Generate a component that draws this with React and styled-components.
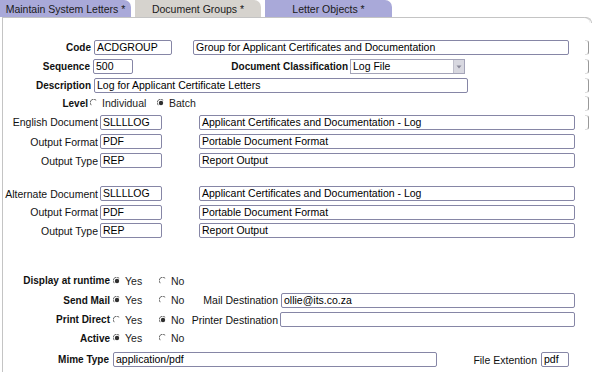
import React from 'react';
import styled, { createGlobalStyle } from 'styled-components';

const GlobalStyle = createGlobalStyle`
  html, body {
    margin: 0;
    padding: 0;
    background: #ffffff;
    font-family: "Liberation Sans", Arial, sans-serif;
    font-size: 10.5px;
    color: #000;
  }
`;

const Page = styled.div`
  width: 600px;
  height: 372px;
  overflow: hidden;
  background: #fff;
`;

const TabBar = styled.div`
  display: flex;
  height: 17px;
  gap: 4px;
`;

const Tab = styled.div`
  width: ${(p) => p.w}px;
  height: 17px;
  box-sizing: border-box;
  display: flex;
  align-items: center;
  justify-content: center;
  background: ${(p) => (p.active ? '#d6d3ce' : '#a9a9d9')};
  border-top-right-radius: 7px;
  color: #1a1a1a;
  font-size: 10.5px;
  padding-top: 1px;
`;

const Panel = styled.div`
  margin-left: 2px;
  width: 588px;
  height: 355px;
  box-sizing: border-box;
  border-top: 1px solid #c4c4c4;
  border-left: 1px solid #c4c4c4;
  border-top-right-radius: 6px;
  padding-top: 19px;
  position: relative;
`;

const Corner = styled.div`
  position: absolute;
  right: -2px;
  top: -1px;
  width: 6px;
  height: 5px;
  border-top: 1px solid #c4c4c4;
  border-right: 1px solid #c4c4c4;
  border-top-right-radius: 6px;
`;

const Form = styled.div`
  display: flex;
  flex-direction: column;
  margin-left: -3px;
`;

const Row = styled.div`
  display: flex;
  align-items: center;
  height: ${(p) => p.h || 19}px;
  margin-top: ${(p) => p.mt || 0}px;
  width: 590px;
`;

const Label = styled.div`
  width: ${(p) => p.w}px;
  flex: none;
  display: flex;
  justify-content: flex-end;
  font-weight: ${(p) => (p.bold ? 'bold' : 'normal')};
  font-size: ${(p) => (p.bold ? '10px' : '10.5px')};
  color: #111;
  white-space: nowrap;
`;

const Field = styled.div`
  width: ${(p) => p.w}px;
  height: 15px;
  flex: none;
  margin-left: ${(p) => p.ml || 0}px;
  box-sizing: border-box;
  border: 1px solid #8686a6;
  border-radius: 2px;
  background: #fff;
  padding: 0 2px;
  font-size: 10.5px;
  line-height: 13px;
  color: #000;
  white-space: nowrap;
  overflow: hidden;
`;

const Select = styled.div`
  width: ${(p) => p.w}px;
  height: 15px;
  flex: none;
  margin-left: ${(p) => p.ml || 0}px;
  box-sizing: border-box;
  border: 1px solid #a4a4b8;
  display: flex;
  align-items: stretch;
  font-size: 10.5px;
  line-height: 13px;
`;

const SelectText = styled.div`
  flex: 1;
  padding: 0 2px;
`;

const SelectButton = styled.div`
  width: 10px;
  background: #d8d8e0;
  border-left: 1px solid #c0c0cc;
  display: flex;
  align-items: center;
  justify-content: center;
`;

const Bracket = styled.div`
  margin-left: auto;
  margin-right: 1px;
  width: 4px;
  height: 15px;
  flex: none;
  box-sizing: border-box;
  border-right: 1px solid #999999;
  border-top: 1px solid #dddddd;
  border-bottom: 1px solid #dddddd;
  border-radius: 0 3px 3px 0;
`;

const RadioGroup = styled.div`
  display: flex;
  align-items: center;
  margin-left: ${(p) => p.ml || 0}px;
  width: ${(p) => p.w}px;
  flex: none;
  gap: 4px;
  color: #222;
`;

const Radio = ({ checked }) => (
  <svg width="8" height="8" viewBox="0 0 8 8">
    <path d="M1.2 6.2 A3.2 3.2 0 0 1 6.2 1.2" fill="none" stroke="#6a6a6a" strokeWidth="1" />
    {checked && <circle cx="4" cy="4" r="2.2" fill="#303030" />}
  </svg>
);

const Choice = ({ ml, w, checked, children }) => (
  <RadioGroup ml={ml} w={w}>
    <Radio checked={checked} />
    <span>{children}</span>
  </RadioGroup>
);

const Arrow = () => (
  <svg width="6" height="4" viewBox="0 0 6 4">
    <path d="M0.5 0.5 L5.5 0.5 L3 3.5 Z" fill="#8a8a9a" />
  </svg>
);

export default function App() {
  return (
    <Page>
      <GlobalStyle />
      <TabBar>
        <Tab w={131}>Maintain System Letters *</Tab>
        <Tab w={126} active>Document Groups *</Tab>
        <Tab w={127}>Letter Objects *</Tab>
      </TabBar>
      <Panel>
        <Corner />
        <Form>
          <Row h={20}>
            <Label w={91} bold>Code</Label>
            <Field w={78} ml={3}>ACDGROUP</Field>
            <Field w={376} ml={21}>Group for Applicant Certificates and Documentation</Field>
            <Bracket />
          </Row>
          <Row>
            <Label w={90} bold>Sequence</Label>
            <Field w={40} ml={3}>500</Field>
            <Label w={215} bold>Document Classification</Label>
            <Select w={115} ml={2}>
              <SelectText>Log File</SelectText>
              <SelectButton><Arrow /></SelectButton>
            </Select>
            <Bracket />
          </Row>
          <Row h={18}>
            <Label w={91} bold>Description</Label>
            <Field w={374} ml={3}>Log for Applicant Certificate Letters</Field>
            <Bracket />
          </Row>
          <Row h={18}>
            <Label w={88} bold>Level</Label>
            <Choice ml={2} w={67}>Individual</Choice>
            <Choice checked w={60}>Batch</Choice>
            <Bracket />
          </Row>
          <Row h={20}>
            <Label w={98}>English Document</Label>
            <Field w={62} ml={2}>SLLLLOG</Field>
            <Field w={376} ml={37}>Applicant Certificates and Documentation - Log</Field>
            <Bracket />
          </Row>
          <Row>
            <Label w={98}>Output Format</Label>
            <Field w={62} ml={2}>PDF</Field>
            <Field w={376} ml={37}>Portable Document Format</Field>
          </Row>
          <Row>
            <Label w={98}>Output Type</Label>
            <Field w={62} ml={2}>REP</Field>
            <Field w={376} ml={37}>Report Output</Field>
          </Row>

          <Row mt={14}>
            <Label w={98}>Alternate Document</Label>
            <Field w={62} ml={2}>SLLLLOG</Field>
            <Field w={376} ml={37}>Applicant Certificates and Documentation - Log</Field>
          </Row>
          <Row h={18}>
            <Label w={98}>Output Format</Label>
            <Field w={62} ml={2}>PDF</Field>
            <Field w={376} ml={37}>Portable Document Format</Field>
          </Row>
          <Row>
            <Label w={98}>Output Type</Label>
            <Field w={62} ml={2}>REP</Field>
            <Field w={376} ml={37}>Report Output</Field>
          </Row>

          <Row mt={31}>
            <Label w={110} bold>Display at runtime</Label>
            <Choice checked ml={3} w={46}>Yes</Choice>
            <Choice w={30}>No</Choice>
          </Row>
          <Row h={20}>
            <Label w={110} bold>Send Mail</Label>
            <Choice checked ml={3} w={46}>Yes</Choice>
            <Choice w={30}>No</Choice>
            <Label w={89}>Mail Destination</Label>
            <Field w={294} ml={3}>ollie@its.co.za</Field>
          </Row>
          <Row>
            <Label w={110} bold>Print Direct</Label>
            <Choice ml={3} w={46}>Yes</Choice>
            <Choice checked w={30}>No</Choice>
            <Label w={89}>Printer Destination</Label>
            <Field w={295} ml={2}></Field>
          </Row>
          <Row h={18}>
            <Label w={110} bold>Active</Label>
            <Choice checked ml={3} w={46}>Yes</Choice>
            <Choice w={30}>No</Choice>
          </Row>
          <Row mt={3}>
            <Label w={109} bold>Mime Type</Label>
            <Field w={324} ml={4}>application/pdf</Field>
            <Label w={100}>File Extention</Label>
            <Field w={28} ml={4}>pdf</Field>
          </Row>
        </Form>
      </Panel>
    </Page>
  );
}
